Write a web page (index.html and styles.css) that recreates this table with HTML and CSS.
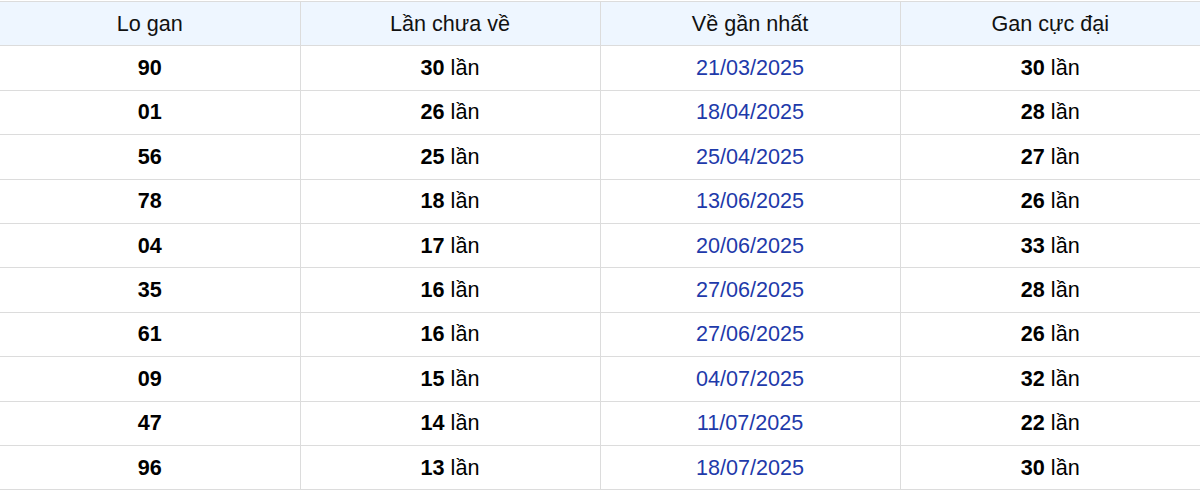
FILE: index.html
```html
<!DOCTYPE html>
<html lang="vi">
<head>
<meta charset="utf-8">
<title>Lo gan</title>
<link rel="stylesheet" href="styles.css">
</head>
<body>
<table class="gan">
<thead>
<tr><th>Lo gan</th><th>Lần chưa về</th><th>Về gần nhất</th><th>Gan cực đại</th></tr>
</thead>
<tbody>
<tr><td><b>90</b></td><td><b>30</b> lần</td><td class="date">21/03/2025</td><td><b>30</b> lần</td></tr>
<tr><td><b>01</b></td><td><b>26</b> lần</td><td class="date">18/04/2025</td><td><b>28</b> lần</td></tr>
<tr><td><b>56</b></td><td><b>25</b> lần</td><td class="date">25/04/2025</td><td><b>27</b> lần</td></tr>
<tr><td><b>78</b></td><td><b>18</b> lần</td><td class="date">13/06/2025</td><td><b>26</b> lần</td></tr>
<tr><td><b>04</b></td><td><b>17</b> lần</td><td class="date">20/06/2025</td><td><b>33</b> lần</td></tr>
<tr><td><b>35</b></td><td><b>16</b> lần</td><td class="date">27/06/2025</td><td><b>28</b> lần</td></tr>
<tr><td><b>61</b></td><td><b>16</b> lần</td><td class="date">27/06/2025</td><td><b>26</b> lần</td></tr>
<tr><td><b>09</b></td><td><b>15</b> lần</td><td class="date">04/07/2025</td><td><b>32</b> lần</td></tr>
<tr><td><b>47</b></td><td><b>14</b> lần</td><td class="date">11/07/2025</td><td><b>22</b> lần</td></tr>
<tr><td><b>96</b></td><td><b>13</b> lần</td><td class="date">18/07/2025</td><td><b>30</b> lần</td></tr>
</tbody>
</table>
</body>
</html>
```
FILE: styles.css
```css
html, body {
  margin: 0;
  padding: 0;
  background: #fff;
}
body {
  padding-top: 1px;
  font-family: "Liberation Sans", Arial, sans-serif;
  color: #000;
}
.gan {
  width: 1200px;
  border-collapse: collapse;
  table-layout: fixed;
  font-size: 21.6px;
}
.gan th,
.gan td {
  border: 1px solid #dcdcdc;
  height: 43.4px;
  padding: 0;
  text-align: center;
  vertical-align: middle;
}
.gan th:first-child,
.gan td:first-child {
  border-left: none;
}
.gan th:last-child,
.gan td:last-child {
  border-right: none;
}
.gan th {
  font-weight: normal;
  background: #eef6ff;
  color: #111;
}
.gan b {
  font-weight: bold;
}
.gan .date {
  color: #1e3aaa;
}
```
